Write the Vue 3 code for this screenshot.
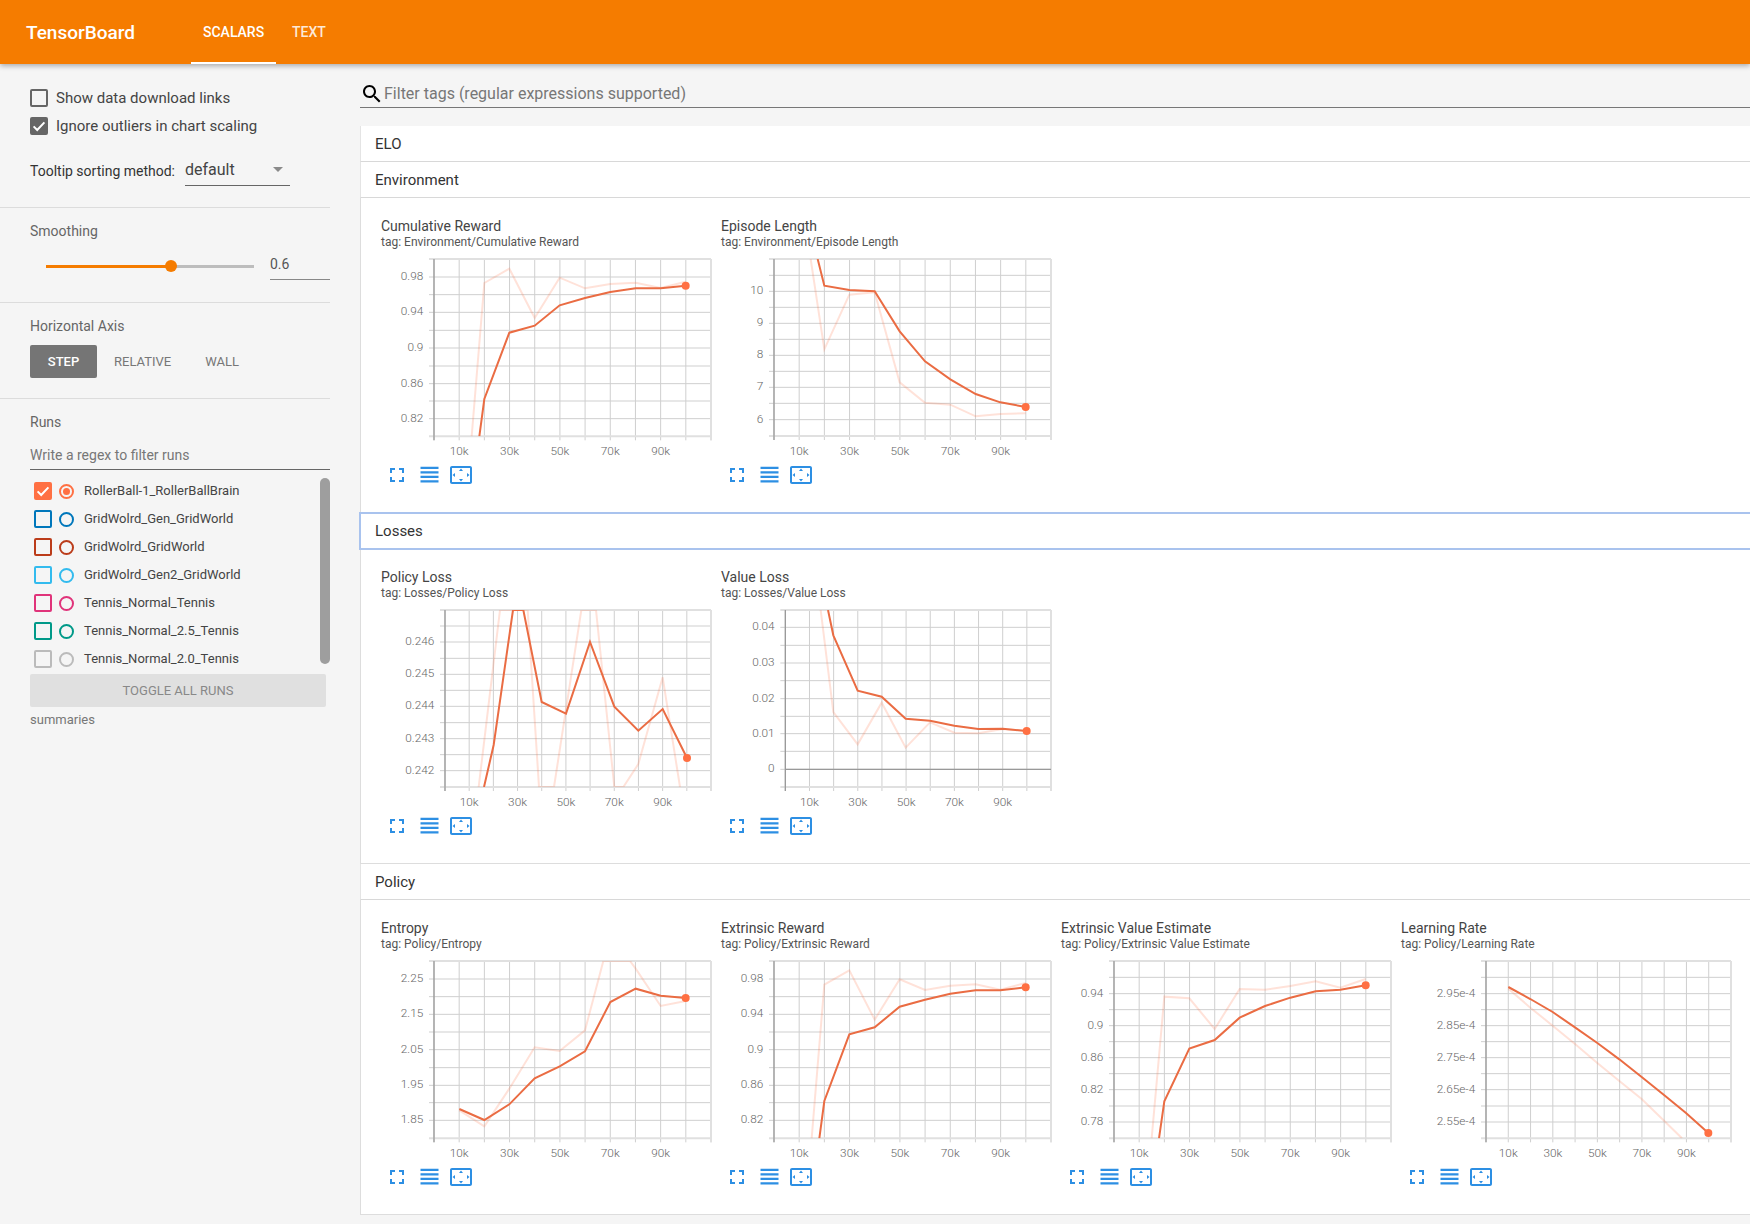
<script setup>
const runs = [
  { name: 'RollerBall-1_RollerBallBrain', color: '#ff7043', on: true },
  { name: 'GridWolrd_Gen_GridWorld', color: '#0077bb' },
  { name: 'GridWolrd_GridWorld', color: '#bb3c1a' },
  { name: 'GridWolrd_Gen2_GridWorld', color: '#33bbee' },
  { name: 'Tennis_Normal_Tennis', color: '#e0337a' },
  { name: 'Tennis_Normal_2.5_Tennis', color: '#009988' },
  { name: 'Tennis_Normal_2.0_Tennis', color: '#bbbbbb' },
]

const xLabels = ['10k', '30k', '50k', '70k', '90k']

const rewardY = { top: 415, bottom: 947, grid: [469, 522, 575, 629, 682, 736, 789, 841, 894], labels: ['0.98', '0.94', '0.9', '0.86', '0.82'] }

const raw = [
  {
    title: 'Cumulative Reward', tag: 'Environment/Cumulative Reward', dx: 21, axis: 222, right: 1053,
    ...rewardY,
    smooth: [[358, 947], [373, 835], [448, 636], [524, 615], [599, 554], [675, 532], [751, 514], [827, 503], [902, 503], [977, 495]],
    rawLine: [[335, 947], [373, 487], [448, 444], [524, 592], [599, 471], [675, 503], [751, 490], [827, 486], [902, 502], [977, 483]],
  },
  {
    title: 'Episode Length', tag: 'Environment/Episode Length', dx: 11, axis: 192, right: 1023,
    top: 147, bottom: 678, grid: [196, 244, 292, 340, 388, 436, 484, 532, 580, 629], labelFrom: 1, labels: ['10', '9', '8', '7', '6'],
    smooth: [[323, 147], [343, 227], [418, 240], [494, 244], [569, 364], [645, 454], [721, 508], [797, 552], [871, 577], [947, 591]],
    rawLine: [[302, 147], [343, 418], [418, 254], [494, 247], [569, 517], [645, 578], [721, 584], [797, 619], [871, 612], [947, 610]],
  },
  {
    title: 'Policy Loss', tag: 'Losses/Policy Loss', dx: 21, axis: 255, right: 1053,
    top: 150, bottom: 681, grid: [198, 246, 295, 343, 391, 439, 488, 536, 584, 632], labelFrom: 1, labels: ['0.246', '0.245', '0.244', '0.243', '0.242'],
    smooth: [[372, 681], [401, 555], [459, 150], [490, 150], [545, 426], [618, 461], [690, 246], [763, 440], [835, 512], [908, 447], [981, 594]],
    rawLine: [[356, 681], [420, 150], [503, 150], [537, 681], [582, 681], [664, 150], [708, 150], [763, 681], [790, 681], [835, 612], [908, 352], [960, 681]],
  },
  {
    title: 'Value Loss', tag: 'Losses/Value Loss', dx: 11, axis: 226, right: 1023,
    top: 150, bottom: 681, grid: [202, 256, 309, 362, 416, 469, 521, 574, 628], labels: ['0.04', '0.03', '0.02', '0.01', '0'], zero: 628,
    smooth: [[354, 150], [370, 226], [443, 392], [515, 410], [587, 476], [660, 482], [733, 497], [805, 507], [878, 506], [950, 513]],
    rawLine: [[332, 150], [370, 456], [443, 553], [515, 428], [587, 563], [660, 487], [733, 518], [805, 520], [878, 507], [950, 513]],
  },
  {
    title: 'Entropy', tag: 'Policy/Entropy', dx: 21, axis: 222, right: 1053,
    top: 152, bottom: 684, grid: [206, 259, 312, 365, 418, 472, 525, 577, 630], labels: ['2.25', '2.15', '2.05', '1.95', '1.85'],
    smooth: [[298, 596], [373, 629], [448, 582], [524, 504], [599, 468], [675, 423], [751, 275], [827, 235], [902, 256], [977, 263]],
    rawLine: [[298, 600], [373, 648], [448, 535], [524, 411], [599, 422], [675, 360], [730, 152], [810, 152], [827, 175], [902, 287], [977, 272]],
  },
  {
    title: 'Extrinsic Reward', tag: 'Policy/Extrinsic Reward', dx: 11, axis: 192, right: 1023,
    top: 152, bottom: 684, grid: [206, 259, 312, 365, 418, 472, 525, 577, 630], labels: ['0.98', '0.94', '0.9', '0.86', '0.82'],
    smooth: [[328, 684], [343, 572], [418, 372], [494, 351], [569, 289], [645, 268], [721, 250], [797, 240], [871, 240], [947, 231]],
    rawLine: [[305, 684], [343, 223], [418, 180], [494, 328], [569, 207], [645, 239], [721, 226], [797, 222], [871, 238], [947, 218]],
  },
  {
    title: 'Extrinsic Value Estimate', tag: 'Policy/Extrinsic Value Estimate', dx: 11, axis: 192, right: 1023,
    top: 152, bottom: 684, grid: [201, 250, 298, 346, 394, 442, 490, 538, 587, 635], labelFrom: 1, labels: ['0.94', '0.9', '0.86', '0.82', '0.78'],
    smooth: [[327, 684], [343, 573], [418, 415], [494, 389], [569, 322], [645, 287], [721, 262], [797, 243], [871, 238], [947, 225]],
    rawLine: [[305, 684], [343, 259], [418, 264], [494, 356], [569, 236], [645, 238], [721, 227], [797, 213], [871, 232], [947, 206]],
  },
  {
    title: 'Learning Rate', tag: 'Policy/Learning Rate', dx: 11, axis: 288, right: 1023,
    top: 152, bottom: 684, grid: [201, 250, 298, 346, 394, 442, 490, 538, 587, 635], labelFrom: 1, labels: ['2.95e-4', '2.85e-4', '2.75e-4', '2.65e-4', '2.55e-4'],
    smooth: [[355, 230], [421, 266], [488, 305], [556, 352], [622, 398], [688, 447], [755, 500], [823, 555], [888, 608], [955, 668]],
    rawLine: [[355, 235], [421, 292], [488, 346], [556, 402], [622, 458], [688, 512], [755, 566], [823, 632], [876, 684]],
  },
]

const charts = raw.map((c, i) => {
  const X = (z) => +(z / 3 - c.dx).toFixed(2)
  const Y = (z) => +((z - c.top) / 3 + 2).toFixed(2)
  const from = c.labelFrom || 0
  const pts = (list) => list.map(([x, y]) => `${X(x)},${Y(y)}`).join(' ')
  const xs = Array.from({ length: 12 }, (_, k) => X(c.axis + (c.right - c.axis) * k / 11))
  const last = c.smooth[c.smooth.length - 1]
  return {
    id: i,
    title: c.title,
    tag: c.tag,
    left: X(c.axis),
    right: X(c.right),
    tickLeft: X(c.axis) - 5,
    top: Y(c.top),
    bottom: Y(c.bottom),
    xs,
    ys: c.grid.map(Y),
    zero: c.zero ? Y(c.zero) : null,
    yLabels: c.labels.map((text, k) => ({ text, y: Y(c.grid[from + k * 2]) })),
    xLabels: xLabels.map((text, k) => ({ text, x: xs[1 + k * 2] })),
    smooth: pts(c.smooth),
    rawLine: pts(c.rawLine),
    dot: { x: X(last[0]), y: Y(last[1]) },
  }
})

const sections = [
  { name: 'Environment', charts: charts.slice(0, 2) },
  { name: 'Losses', charts: charts.slice(2, 4), focused: true },
  { name: 'Policy', charts: charts.slice(4, 8) },
]
</script>

<template>
  <div class="page">
    <header class="topbar">
      <div class="brand">TensorBoard</div>
      <nav class="tabs">
        <div class="tab active">SCALARS</div>
        <div class="tab">TEXT</div>
      </nav>
    </header>

    <div class="body">
      <aside class="sidebar">
        <section class="side s1">
          <label class="check-row">
            <span class="box"></span>
            <span>Show data download links</span>
          </label>
          <label class="check-row">
            <span class="box checked">
              <svg viewBox="0 0 18 18" width="18" height="18"><path d="M3.6 9.4l3.6 3.6 7.2-7.6" fill="none" stroke="#fff" stroke-width="2" /></svg>
            </span>
            <span>Ignore outliers in chart scaling</span>
          </label>
          <div class="tooltip-row">
            <span class="tooltip-label">Tooltip sorting method:</span>
            <div class="select">
              <span>default</span>
              <span class="caret"></span>
            </div>
          </div>
        </section>

        <section class="side s2">
          <div class="side-title">Smoothing</div>
          <div class="slider-row">
            <div class="slider">
              <div class="fill"></div>
              <div class="knob"></div>
            </div>
            <div class="slider-value">0.6</div>
          </div>
        </section>

        <section class="side s3">
          <div class="side-title">Horizontal Axis</div>
          <div class="axis-row">
            <div class="axis-btn selected">STEP</div>
            <div class="axis-btn relative-btn">RELATIVE</div>
            <div class="axis-btn wall-btn">WALL</div>
          </div>
        </section>

        <section class="side s4">
          <div class="side-title">Runs</div>
          <div class="run-filter">Write a regex to filter runs</div>
          <div class="run-area">
            <ul class="run-list">
              <li v-for="run in runs" :key="run.name" class="run">
                <span class="run-box" :style="{ borderColor: run.color, background: run.on ? run.color : 'transparent' }">
                  <svg v-if="run.on" viewBox="0 0 18 18" width="18" height="18"><path d="M3.6 9.4l3.6 3.6 7.2-7.6" fill="none" stroke="#fff" stroke-width="2" /></svg>
                </span>
                <span class="run-radio" :style="{ borderColor: run.color }">
                  <span v-if="run.on" class="run-dot" :style="{ background: run.color }"></span>
                </span>
                <span class="run-name">{{ run.name }}</span>
              </li>
            </ul>
            <div class="scrollbar"></div>
          </div>
          <div class="toggle">TOGGLE ALL RUNS</div>
          <div class="summaries">summaries</div>
        </section>
      </aside>

      <main class="main">
        <div class="filter">
          <svg class="search" viewBox="0 0 24 24" width="24" height="24"><path d="M15.5 14h-.79l-.28-.27C15.41 12.59 16 11.11 16 9.5 16 5.91 13.09 3 9.5 3S3 5.91 3 9.5 5.91 16 9.5 16c1.61 0 3.09-.59 4.23-1.57l.27.28v.79l5 4.99L20.49 19l-4.99-5zm-6 0C7.01 14 5 11.99 5 9.5S7.01 5 9.5 5 14 7.01 14 9.5 11.99 14 9.5 14z" fill="#000" /></svg>
          <span>Filter tags (regular expressions supported)</span>
        </div>

        <div class="cat-head">ELO</div>

        <template v-for="section in sections" :key="section.name">
          <div class="cat-head" :class="{ focused: section.focused }">{{ section.name }}</div>
          <div class="cat-body">
            <article v-for="chart in section.charts" :key="chart.id" class="card">
              <div class="card-title">{{ chart.title }}</div>
              <div class="card-tag">tag: {{ chart.tag }}</div>
              <svg class="plot" width="335" height="204" viewBox="0 0 335 204">
                <defs>
                  <clipPath :id="`clip-${chart.id}`">
                    <rect :x="chart.left" :y="chart.top" :width="chart.right - chart.left" :height="chart.bottom - chart.top" />
                  </clipPath>
                </defs>
                <g class="grid">
                  <line v-for="x in chart.xs" :key="`x${x}`" :x1="x" :x2="x" :y1="chart.top" :y2="chart.bottom + 4" />
                  <line v-for="y in chart.ys" :key="`y${y}`" :x1="chart.tickLeft" :x2="chart.right" :y1="y" :y2="y" />
                </g>
                <g class="frame">
                  <line :x1="chart.tickLeft" :x2="chart.right" :y1="chart.top" :y2="chart.top" />
                  <line :x1="chart.tickLeft" :x2="chart.right" :y1="chart.bottom" :y2="chart.bottom" />
                  <line :x1="chart.right" :x2="chart.right" :y1="chart.top" :y2="chart.bottom + 4" />
                </g>
                <line class="axis" :x1="chart.left" :x2="chart.left" :y1="chart.top" :y2="chart.bottom + 4" />
                <line v-if="chart.zero" class="axis" :x1="chart.left" :x2="chart.right" :y1="chart.zero" :y2="chart.zero" />
                <g :clip-path="`url(#clip-${chart.id})`">
                  <polyline class="raw" :points="chart.rawLine" />
                  <polyline class="smooth" :points="chart.smooth" />
                </g>
                <circle class="dot" :cx="chart.dot.x" :cy="chart.dot.y" r="4" />
                <text v-for="l in chart.yLabels" :key="l.text" class="tick" text-anchor="end" :x="chart.left - 10.7" :y="l.y + 3">{{ l.text }}</text>
                <text v-for="l in chart.xLabels" :key="l.text" class="tick" text-anchor="middle" :x="l.x" :y="chart.bottom + 19">{{ l.text }}</text>
              </svg>
              <div class="actions">
                <svg class="ic-full" viewBox="0 0 24 24" width="24" height="24"><path d="M7 14H5v5h5v-2H7v-3zm-2-4h2V7h3V5H5v5zm12 7h-3v2h5v-5h-2v3zM14 5v2h3v3h2V5h-5z" /></svg>
                <svg class="ic-list" viewBox="0 0 24 24" width="27" height="27"><path d="M4 15h16v-2H4v2zm0 4h16v-2H4v2zm0-8h16V9H4v2zm0-6v2h16V5H4z" /></svg>
                <svg class="ic-fit" viewBox="0 0 24 24" width="24" height="24"><path d="M12.01 5.5L10 8h4l-1.99-2.5zM18 10v4l2.5-1.99L18 10zM6 10l-2.5 2.01L6 14v-4zm8 6h-4l2.01 2.5L14 16zm7-13H3c-1.1 0-2 .9-2 2v14c0 1.1.9 2 2 2h18c1.1 0 2-.9 2-2V5c0-1.1-.9-2-2-2zm0 16.01H3V4.99h18v14.02z" /></svg>
              </div>
            </article>
          </div>
        </template>
      </main>
    </div>
  </div>
</template>

<style>
html, body { margin: 0; background: #f5f5f5; overflow: hidden; }
</style>

<style scoped>
.page {
  width: 1750px;
  height: 1224px;
  overflow: hidden;
  background: #f5f5f5;
  font-family: Roboto, "Liberation Sans", sans-serif;
  color: #333;
}
.topbar {
  height: 64px;
  background: #f57c00;
  color: #fff;
  display: flex;
  box-shadow: 0 2px 5px rgba(0, 0, 0, .3);
  position: relative;
  z-index: 2;
}
.brand {
  width: 165px;
  padding-left: 26px;
  font-size: 19px;
  font-weight: 500;
  line-height: 65px;
}
.tabs { display: flex; }
.tab {
  height: 64px;
  box-sizing: border-box;
  padding: 0 16px;
  font-size: 14px;
  font-weight: 500;
  line-height: 65px;
  color: rgba(255, 255, 255, .85);
}
.tab.active {
  width: 85px;
  padding: 0 12px;
  text-align: center;
  color: #fff;
  border-bottom: 2px solid #fff;
}
.body { display: flex; height: 1160px; }
.sidebar { width: 330px; flex: none; }
.side {
  box-sizing: border-box;
  padding: 0 0 0 30px;
  border-bottom: 1px solid #dcdcdc;
}
.s1 { height: 144px; padding-top: 25px; }
.s2 { height: 95px; }
.s3 { height: 96px; }
.s4 { border-bottom: 0; }
.check-row {
  display: flex;
  align-items: center;
  gap: 8px;
  height: 18px;
  margin-bottom: 10px;
  font-size: 15px;
  color: #444;
}
.box {
  width: 18px;
  height: 18px;
  box-sizing: border-box;
  border: 2px solid #666;
  border-radius: 2px;
  flex: none;
  display: block;
  position: relative;
}
.box.checked { background: #666; }
.box svg { position: absolute; left: -2px; top: -2px; }
.tooltip-row {
  display: flex;
  align-items: flex-end;
  margin-top: 20px;
}
.tooltip-label { font-size: 14px; color: #333; width: 155px; padding-bottom: 7px; }
.select {
  width: 105px;
  height: 28px;
  border-bottom: 1px solid #666;
  display: flex;
  justify-content: space-between;
  align-items: center;
  font-size: 16px;
  color: #444;
  padding-bottom: 2px;
  box-sizing: content-box;
}
.caret {
  width: 0;
  height: 0;
  border-left: 5px solid transparent;
  border-right: 5px solid transparent;
  border-top: 5px solid #8a8a8a;
  margin-right: 7px;
}
.side-title {
  font-size: 14px;
  color: #666;
  line-height: 18px;
  padding-top: 14px;
}
.slider-row {
  display: flex;
  align-items: center;
  padding-left: 16px;
  gap: 16px;
  margin-top: 12px;
}
.slider {
  width: 208px;
  height: 3px;
  background: #bdbdbd;
  position: relative;
}
.fill { width: 125px; height: 3px; background: #f57c00; }
.knob {
  position: absolute;
  left: 119px;
  top: -5px;
  width: 12px;
  height: 12px;
  border-radius: 50%;
  background: #f57c00;
}
.slider-value {
  width: 60px;
  height: 28px;
  line-height: 25px;
  box-sizing: border-box;
  border-bottom: 1px solid #888;
  font-size: 14px;
  color: #555;
}
.axis-row {
  display: flex;
  align-items: center;
  margin-top: 10px;
  height: 33px;
}
.axis-btn {
  font-size: 13px;
  font-weight: 400;
  color: #777;
  line-height: 33px;
}
.axis-btn.selected {
  width: 67px;
  text-align: center;
  background: #757575;
  color: #fff;
  font-weight: 500;
  border-radius: 2px;
}
.relative-btn { margin-left: 17px; }
.wall-btn { margin-left: 34px; }
.run-filter {
  margin-top: 11px;
  height: 28px;
  line-height: 26px;
  box-sizing: border-box;
  border-bottom: 1px solid #666;
  font-size: 14px;
  color: #777;
}
.run-area { display: flex; margin-top: 7px; height: 197px; }
.run-list { list-style: none; margin: 0; padding: 0 0 0 4px; flex: 1; min-width: 0; }
.run {
  display: flex;
  align-items: center;
  height: 28px;
}
.run-box {
  width: 18px;
  height: 18px;
  box-sizing: border-box;
  border: 2px solid;
  border-radius: 2px;
  flex: none;
  position: relative;
}
.run-box svg { position: absolute; left: -2px; top: -2px; }
.run-radio {
  width: 15px;
  height: 15px;
  box-sizing: border-box;
  border: 2px solid;
  border-radius: 50%;
  margin-left: 7px;
  flex: none;
  display: flex;
  align-items: center;
  justify-content: center;
}
.run-dot { width: 7px; height: 7px; border-radius: 50%; }
.run-name { margin-left: 10px; margin-bottom: 2px; font-size: 13px; color: #444; }
.scrollbar {
  width: 10px;
  height: 186px;
  margin-top: 1px;
  border-radius: 5px;
  background: #9e9e9e;
}
.toggle {
  width: 296px;
  height: 33px;
  line-height: 33px;
  background: #e0e0e0;
  border-radius: 2px;
  text-align: center;
  font-size: 13px;
  color: #888;
}
.summaries { margin-top: 5px; font-size: 13px; color: #777; line-height: 16px; }

.main { margin-left: 30px; flex: 1; min-width: 0; }
.filter {
  display: flex;
  align-items: center;
  box-sizing: border-box;
  height: 44px;
  padding-top: 16px;
  border-bottom: 1px solid #777;
  margin-bottom: 18px;
  font-size: 16px;
  color: #777;
}
.cat-head {
  height: 36px;
  box-sizing: border-box;
  padding-left: 14px;
  line-height: 37px;
  font-size: 15px;
  color: #333;
  background: #fff;
  border-bottom: 1px solid #d8d8d8;
  border-left: 1px solid #e4e4e4;
}
.cat-head.focused {
  outline: 2px solid #a9c3ee;
  outline-offset: -1px;
  margin-right: -6px;
  border: 0;
  padding-left: 15px;
  line-height: 37px;
  position: relative;
  z-index: 1;
}
.cat-body {
  height: 315px;
  box-sizing: border-box;
  background: #fff;
  border-left: 1px solid #ddd;
  border-bottom: 1px solid #ddd;
  padding: 19px 0 0 20px;
  display: flex;
}
.card { width: 340px; flex: none; }
.card-title { font-size: 14px; line-height: 18px; color: #444; }
.card-tag { font-size: 12px; line-height: 14px; color: #555; }
.plot { display: block; margin-top: 8px; }
.grid line { stroke: #cfcfcf; stroke-width: 1; }
.frame line { stroke: #e0e0e0; stroke-width: 2; }
.axis { stroke: #999; stroke-width: 1.3; }
.raw { fill: none; stroke: #ff7043; stroke-opacity: .2; stroke-width: 2; }
.smooth { fill: none; stroke: #ea6c43; stroke-width: 2; }
.dot { fill: #ff7043; }
.tick { font-family: Roboto, sans-serif; font-weight: 300; font-size: 11.8px; fill: #666; }
.actions { display: flex; align-items: center; padding-left: 4px; gap: 6.5px; height: 27px; }
.actions svg { fill: #2d8fe3; flex: none; }
</style>
